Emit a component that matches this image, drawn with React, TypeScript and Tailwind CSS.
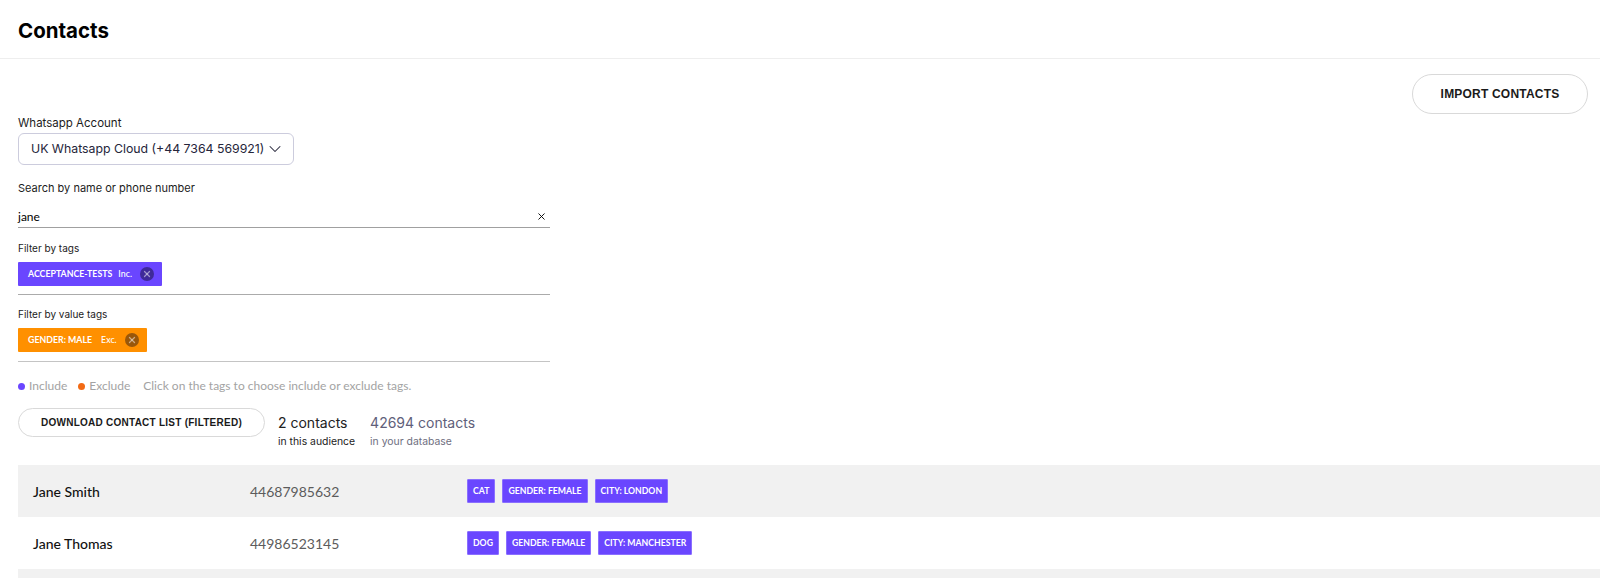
import React from 'react';
import { ChevronDown, X } from 'lucide-react';

const contacts = [
  { name: 'Jane Smith', phone: '44687985632', tags: ['CAT', 'GENDER: FEMALE', 'CITY: LONDON'] },
  { name: 'Jane Thomas', phone: '44986523145', tags: ['DOG', 'GENDER: FEMALE', 'CITY: MANCHESTER'] },
];

const Chip: React.FC<{ label: string; mode: string; bg: string; knob: string; gap: string }> = ({ label, mode, bg, knob, gap }) => (
  <div className={`flex h-6 w-fit items-center rounded-[1px] pl-[10px] pr-2 text-white font-['Lato',sans-serif] text-[8.8px] ${bg}`}>
    <span className="font-bold">{label}</span>
    <span className={`font-medium ${gap}`}>{mode}</span>
    <span className={`ml-2 flex h-[14px] w-[14px] items-center justify-center rounded-full ${knob}`}>
      <X className="h-[10px] w-[10px] text-white/50" strokeWidth={3} />
    </span>
  </div>
);

const App: React.FC = () => {
  return (
    <div className="h-[578px] overflow-hidden bg-white font-['Inter',sans-serif] text-black">
      <header className="flex h-[59px] items-center border-b border-[#eeeeee] pl-[18px] pt-[5px]">
        <h1 className="text-[20.5px] font-bold leading-none">Contacts</h1>
      </header>

      <div className="flex justify-end pt-[15px] pr-3">
        <button className="h-[40px] w-[176px] rounded-full border border-[#d9d9d9] font-['Liberation_Sans',sans-serif] text-[12px] font-bold tracking-[0.2px] text-[#1a1a1a]">
          IMPORT CONTACTS
        </button>
      </div>

      <div className="pl-[18px]">
        <div className="mt-[2px] w-[532px]">
          <label className="block text-[11.5px] leading-[15px] text-[#1c1c1c]">Whatsapp Account</label>
          <div className="mt-[2px] flex h-[32px] w-[276px] items-center justify-between rounded-md border border-[#ccccdd] pl-3 pr-[8px] text-[12.3px] text-[#25253a]">
            <span className="whitespace-nowrap">UK Whatsapp Cloud (+44 7364 569921)</span>
            <ChevronDown className="h-[20px] w-[20px] shrink-0" strokeWidth={1.25} />
          </div>

          <label className="mt-[16px] block text-[11px] leading-[15px] text-[#1c1c1c]">Search by name or phone number</label>
          <div className="mt-[12px] flex h-[20px] items-start justify-between border-b border-[#a0a0a0] pt-[1px] pr-[3px] font-['Lato',sans-serif] text-[12px] leading-[16px]">
            <span>jane</span>
            <X className="mt-[2px] h-[11px] w-[11px]" strokeWidth={2} />
          </div>

          <label className="mt-[13px] block text-[10px] leading-[14px] text-[#1c1c1c]">Filter by tags</label>
          <div className="mt-[7px] h-[33px] border-b border-[#ababab]">
            <Chip label="ACCEPTANCE-TESTS" mode="Inc." bg="bg-[#6a46ff]" knob="bg-[#3f2a99]" gap="ml-[6px]" />
          </div>

          <label className="mt-[12px] block text-[10px] leading-[14px] text-[#1c1c1c]">Filter by value tags</label>
          <div className="mt-[7px] h-[34px] border-b border-[#c4c4c4]">
            <Chip label="GENDER: MALE" mode="Exc." bg="bg-[#ff9000]" knob="bg-[#99570a]" gap="ml-[9px]" />
          </div>
        </div>

        <div className="mt-[17px] flex items-center font-['Lato',sans-serif] text-[12px] leading-[14px] text-[#a3a3a3]">
          <span className="h-[7px] w-[7px] rounded-full bg-[#6a46ff]" />
          <span className="ml-[4px]">Include</span>
          <span className="ml-[11px] h-[7px] w-[7px] rounded-full bg-[#f26a14]" />
          <span className="ml-[4px]">Exclude</span>
          <span className="ml-[13px]">Click on the tags to choose include or exclude tags.</span>
        </div>

        <div className="mt-[15px] flex items-start">
          <button className="h-[29px] w-[247px] rounded-full border border-[#d9d9d9] font-['Liberation_Sans',sans-serif] text-[10px] font-bold tracking-[0.25px] text-[#1a1a1a]">
            DOWNLOAD CONTACT LIST (FILTERED)
          </button>
          <div className="ml-[13px] pt-[6px]">
            <p className="text-[14px] leading-[18px] text-[#222222]">2 contacts</p>
            <p className="mt-[3px] text-[10.4px] leading-[14px] text-[#222222]">in this audience</p>
          </div>
          <div className="ml-[15px] pt-[6px]">
            <p className="text-[14px] leading-[18px] text-[#60607a]">42694 contacts</p>
            <p className="mt-[3px] text-[10.4px] leading-[14px] text-[#6e6e80]">in your database</p>
          </div>
        </div>

        <div className="mt-[16px] font-['Lato',sans-serif]">
          {contacts.map((c, i) => (
            <div key={c.phone} className={`flex h-[52px] items-center ${i === 0 ? 'bg-[#f1f1f1]' : 'bg-white'}`}>
              <span className="ml-[15px] w-[217px] text-[14px] font-medium text-[#111111]">{c.name}</span>
              <span className="w-[217px] text-[14px] text-[#5c5c5c]">{c.phone}</span>
              <div className="flex gap-[7px]">
                {c.tags.map((t) => (
                  <span key={t} className="flex h-[24px] items-center rounded-[1px] border border-[#8a6fff] bg-[#6a46ff] px-[5px] text-[8.7px] font-bold text-white">{t}</span>
                ))}
              </div>
            </div>
          ))}
          <div className="h-[20px] bg-[#f1f1f1]" />
        </div>
      </div>
    </div>
  );
};

export default App;
